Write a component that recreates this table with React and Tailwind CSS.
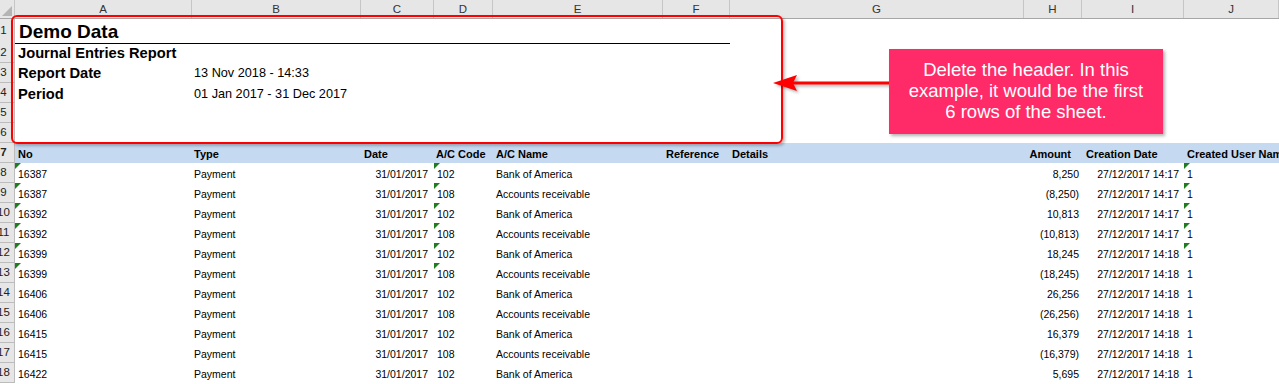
import React from 'react';

const GRID = 'grid grid-cols-[15px_177px_169px_73px_59px_170px_67px_294px_58px_102px_95px]';
const LETTERS = ['A', 'B', 'C', 'D', 'E', 'F', 'G', 'H', 'I', 'J'];

const rows = [
  { n: 8, no: '16387', code: '102', name: 'Bank of America', amt: '8,250', time: '14:17', tri: true, triJ: true },
  { n: 9, no: '16387', code: '108', name: 'Accounts receivable', amt: '(8,250)', time: '14:17', tri: true, triJ: true },
  { n: 10, no: '16392', code: '102', name: 'Bank of America', amt: '10,813', time: '14:17', tri: true, triJ: true },
  { n: 11, no: '16392', code: '108', name: 'Accounts receivable', amt: '(10,813)', time: '14:17', tri: true, triJ: true },
  { n: 12, no: '16399', code: '102', name: 'Bank of America', amt: '18,245', time: '14:18', tri: true, triJ: true },
  { n: 13, no: '16399', code: '108', name: 'Accounts receivable', amt: '(18,245)', time: '14:18', tri: true, triJ: false },
  { n: 14, no: '16406', code: '102', name: 'Bank of America', amt: '26,256', time: '14:18' },
  { n: 15, no: '16406', code: '108', name: 'Accounts receivable', amt: '(26,256)', time: '14:18' },
  { n: 16, no: '16415', code: '102', name: 'Bank of America', amt: '16,379', time: '14:18' },
  { n: 17, no: '16415', code: '108', name: 'Accounts receivable', amt: '(16,379)', time: '14:18' },
  { n: 18, no: '16422', code: '102', name: 'Bank of America', amt: '5,695', time: '14:18' },
];

function RowHead({ n }) {
  return (
    <div className="relative overflow-hidden bg-[#e6e6e6] border-r border-b border-[#bcbcbc]">
      <div className="w-[25px] -ml-[9px] h-full flex items-center justify-center text-[11.5px] text-[#222]">{n}</div>
    </div>
  );
}

function Tri() {
  return <span className="absolute left-0 top-0 w-0 h-0 border-t-[6px] border-t-[#1e7d1e] border-r-[6px] border-r-transparent" />;
}

export default function App() {
  return (
    <div className="relative w-[1279px] h-[384px] overflow-hidden bg-white font-['Liberation_Sans',Arial,sans-serif] leading-[1.15] text-black">
      {/* column letters */}
      <div className={`${GRID} h-[19px] bg-[#e6e6e6] border-b border-[#a6a6a6]`}>
        <div className="relative border-r border-[#c6c6c6]">
          <span className="absolute right-[2px] bottom-[2px] w-0 h-0 border-l-[10px] border-l-transparent border-b-[10px] border-b-[#b4b4b4]" />
        </div>
        {LETTERS.map((l) => (
          <div key={l} className="border-r border-[#c6c6c6] flex items-center justify-center text-[11.5px] text-[#333] pt-[2px]">{l}</div>
        ))}
      </div>

      {/* header block, rows 1-6 */}
      <div className={`${GRID} h-[24px]`}>
        <RowHead n={1} />
        <div className="col-span-6 border-b border-black flex items-center pl-[4px] pt-[2px] text-[19px] font-bold whitespace-nowrap">Demo Data</div>
      </div>
      <div className={`${GRID} h-[20px]`}>
        <RowHead n={2} />
        <div className="col-span-3 flex items-center pl-[3px] pt-[1px] text-[14.7px] font-bold whitespace-nowrap">Journal Entries Report</div>
      </div>
      <div className={`${GRID} h-[20px]`}>
        <RowHead n={3} />
        <div className="flex items-center pl-[3px] pt-[1px] text-[14.7px] font-bold whitespace-nowrap">Report Date</div>
        <div className="col-span-2 flex items-center pl-[2px] pt-[1px] text-[12.7px] whitespace-nowrap">13 Nov 2018 - 14:33</div>
      </div>
      <div className={`${GRID} h-[20px]`}>
        <RowHead n={4} />
        <div className="flex items-center pl-[3px] pt-[2px] text-[14.7px] font-bold whitespace-nowrap">Period</div>
        <div className="col-span-2 flex items-center pl-[2px] pt-[2px] text-[12.7px] whitespace-nowrap">01 Jan 2017 - 31 Dec 2017</div>
      </div>
      <div className={`${GRID} h-[20px]`}>
        <RowHead n={5} />
      </div>
      <div className={`${GRID} h-[20px]`}>
        <RowHead n={6} />
      </div>

      {/* row 7: column titles */}
      <div className={`${GRID} h-[20px] text-[11px] font-bold whitespace-nowrap`}>
        <RowHead n={7} />
        <div className="bg-[#c5d9f1] flex items-center pl-[3px] pt-[2px]">No</div>
        <div className="bg-[#c5d9f1] flex items-center pl-[2px] pt-[2px]">Type</div>
        <div className="bg-[#c5d9f1] flex items-center pl-[3px] pt-[2px]">Date</div>
        <div className="bg-[#c5d9f1] flex items-center pl-[2px] pt-[2px]">A/C Code</div>
        <div className="bg-[#c5d9f1] flex items-center pl-[3px] pt-[2px]">A/C Name</div>
        <div className="bg-[#c5d9f1] flex items-center pl-[3px] pt-[2px]">Reference</div>
        <div className="bg-[#c5d9f1] flex items-center pl-[2px] pt-[2px]">Details</div>
        <div className="bg-[#c5d9f1] flex items-center justify-end pr-[11px] pt-[2px]">Amount</div>
        <div className="bg-[#c5d9f1] flex items-center pl-[4px] pt-[2px]">Creation Date</div>
        <div className="bg-[#c5d9f1] flex items-center pl-[3px] pt-[2px] overflow-hidden">Created User Name</div>
      </div>

      {/* data rows */}
      {rows.map((r) => (
        <div key={r.n} className={`${GRID} h-[20px] text-[10.5px] whitespace-nowrap`}>
          <RowHead n={r.n} />
          <div className="relative flex items-center pl-[3px] pt-[2px]">{r.tri && <Tri />}{r.no}</div>
          <div className="flex items-center pl-[2px] pt-[2px]">Payment</div>
          <div className="flex items-center justify-end pr-[6px] pt-[2px]">31/01/2017</div>
          <div className="relative flex items-center pl-[3px] pt-[2px]">{r.tri && <Tri />}{r.code}</div>
          <div className="flex items-center pl-[3px] pt-[2px]">{r.name}</div>
          <div />
          <div />
          <div className="flex items-center justify-end pr-[3px] pt-[2px]">{r.amt}</div>
          <div className="flex items-center justify-end pr-[5px] pt-[2px]">27/12/2017 {r.time}</div>
          <div className="relative flex items-center pl-[3px] pt-[2px]">{r.triJ && <Tri />}1</div>
        </div>
      ))}

      {/* annotation: red frame round the header rows */}
      <div className="absolute left-[11px] top-[15px] w-[772px] h-[129px] border-2 border-[#ff0000] rounded-[6px] shadow-[2px_2px_3px_rgba(0,0,0,0.25)]" />

      {/* arrow */}
      <svg className="absolute left-[770px] top-[70px]" width="122" height="28" viewBox="0 0 122 28">
        <g style={{ filter: 'drop-shadow(2px 2px 1.5px rgba(0,0,0,0.3))' }}>
          <rect x="22" y="11.5" width="98" height="3" fill="#ff0000" />
          <polygon points="3,13 27,5 23,13 27,21" fill="#ff0000" />
        </g>
      </svg>

      {/* callout */}
      <div className="absolute left-[889px] top-[49px] w-[274px] h-[85px] bg-[#ff2a68] shadow-[2px_2px_3px_rgba(0,0,0,0.3)] flex items-center justify-center text-center text-white text-[18.5px] leading-[21px] pb-[2px]">
        <p>Delete the header. In this<br />example, it would be the first<br />6 rows of the sheet.</p>
      </div>
    </div>
  );
}
